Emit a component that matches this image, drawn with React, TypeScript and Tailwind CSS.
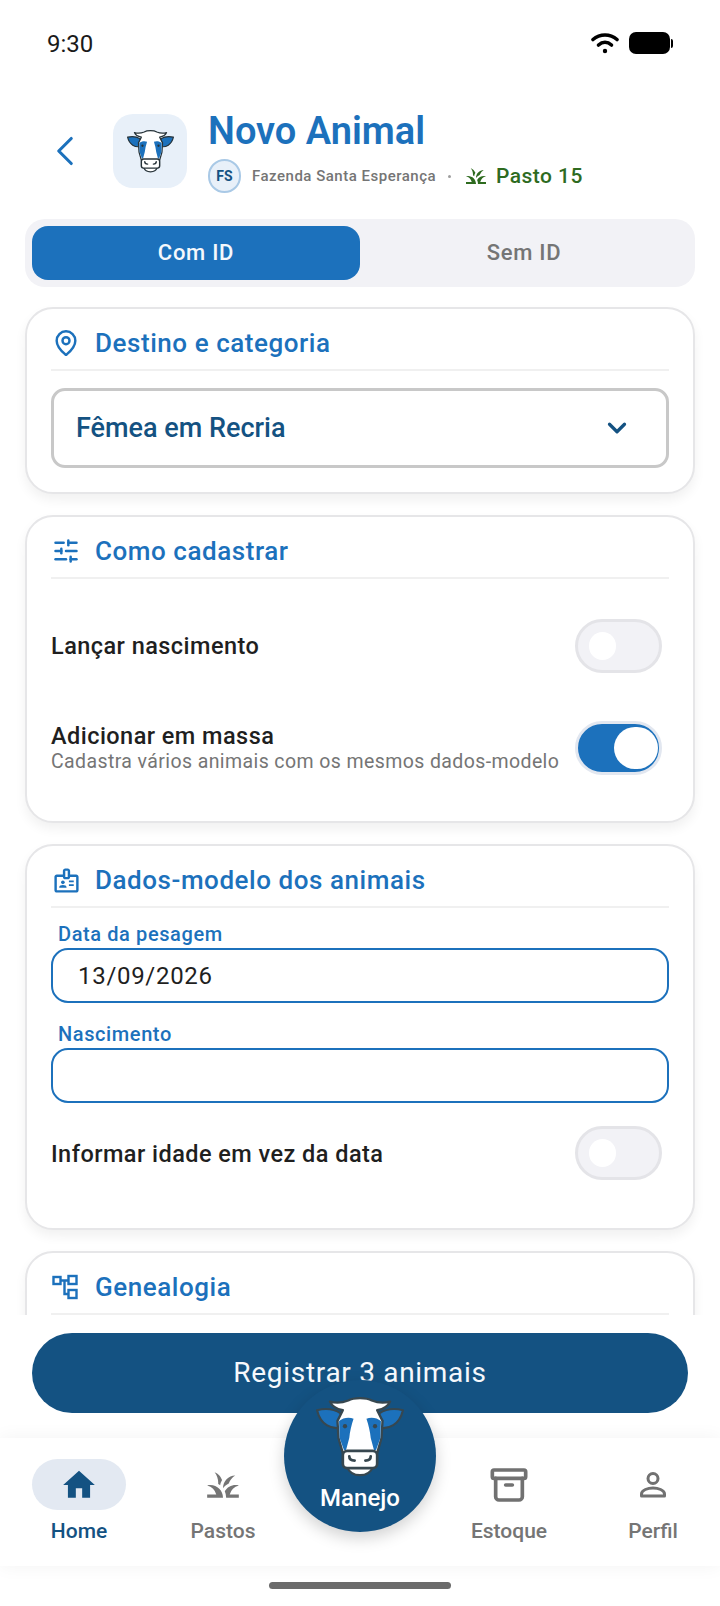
import { Archive, ChevronDown, ChevronLeft, MapPin, SlidersHorizontal } from 'lucide-react'
import type { ReactNode } from 'react'
import { MdGrass, MdHome, MdOutlineBadge } from 'react-icons/md'

// Cabeça da vaca, usada no cartão do topo e no botão Manejo
function CowIcon({ className, stroke }: { className: string; stroke: string }) {
    return (
        <svg viewBox="0 0 82 78" className={className}>
            <path d="M1 14C9 12 17 13 23 17L25 30C14 33 4 27 1 14Z" fill="#1c71bc" stroke={stroke} strokeWidth="2" strokeLinejoin="round" />
            <path d="M81 14C73 12 65 13 59 17L57 30C68 33 78 27 81 14Z" fill="#1c71bc" stroke={stroke} strokeWidth="2" strokeLinejoin="round" />
            <path
                d="M13 6C20 8 25 7 30 5C35 2 47 2 52 5C57 7 62 8 69 6C67 11 62 13 57 14L62 24L61 40L57 54L25 54L21 40L20 24L25 14C20 13 15 11 13 6Z"
                fill="#fff"
                stroke={stroke}
                strokeWidth="2.200"
                strokeLinejoin="round"
            />
            <path d="M21.500 24C25 21 31 20 35 22C33 28 31.500 34 31 40L28 51L26 51L22 40Z" fill="#1c71bc" />
            <path d="M60.500 24C57 21 51 20 47 22C49 28 50.500 34 51 40L54 51L56 51L60 40Z" fill="#1c71bc" />
            <circle cx="27" cy="29" r="2" fill={stroke} />
            <circle cx="55" cy="29" r="2" fill={stroke} />
            <path d="M29 67C33 77 49 77 53 67Z" fill="#fff" stroke={stroke} strokeWidth="2" strokeLinejoin="round" />
            <rect x="25" y="52" width="32" height="16" rx="4" fill="#fff" stroke={stroke} strokeWidth="2.500" />
            <path d="M31 57C31 60 33 61 36 61M51 57C51 60 49 61 46 61" fill="none" stroke={stroke} strokeWidth="2.500" strokeLinecap="round" />
        </svg>
    )
}

function TreeIcon() {
    return (
        <svg viewBox="0 0 26 26" className="h-[26px] w-[26px] text-[#1c71bc]" fill="none" stroke="currentColor" strokeWidth="2.400">
            <rect x="1.500" y="3" width="7" height="7" />
            <rect x="16.500" y="2" width="8" height="8" />
            <rect x="16.500" y="16" width="8" height="8" />
            <path d="M8.500 6.500H16.500M12.500 6.500V20H16.500" />
        </svg>
    )
}

function PersonIcon() {
    return (
        <svg viewBox="0 0 30 30" className="h-[30px] w-[30px] text-[#717171]" fill="none" stroke="currentColor" strokeWidth="3">
            <circle cx="15" cy="8.500" r="5" />
            <path d="M3.500 24C3.500 20 10 18 15 18C20 18 26.500 20 26.500 24V26H3.500Z" strokeLinejoin="round" />
        </svg>
    )
}

function Card({ icon, title, children, className }: { icon: ReactNode; title: string; children?: ReactNode; className: string }) {
    return (
        <section className={`shrink-0 rounded-[28px] border-2 border-[#e6e6e8] bg-white px-[24px] shadow-[0_6px_12px_rgba(0,0,0,0.06)] ${className}`}>
            <div className="flex h-[62px] items-center border-b-2 border-[#f0f0f0] pt-[8px]">
                <div className="flex w-[44px] items-center justify-start pl-[1px]">{icon}</div>
                <h2 className="text-[26px] font-medium leading-none tracking-[0.55px] text-[#1c71bc]">{title}</h2>
            </div>
            {children}
        </section>
    )
}

function Toggle({ on }: { on?: boolean }) {
    if (on) {
        return (
            <div className="flex h-[54px] w-[87px] shrink-0 items-center justify-end rounded-full border-[3px] border-[#e2e7f0] bg-[#1c71bc] pr-[1px]">
                <div className="h-[42px] w-[44px] rounded-full bg-white" />
            </div>
        )
    }
    return (
        <div className="flex h-[54px] w-[87px] shrink-0 items-center rounded-full border-[3px] border-[#e4e4e8] bg-[#f2f2f6] pl-[11px]">
            <div className="h-[28px] w-[27px] rounded-full bg-white" />
        </div>
    )
}

function DateField({ label, value, className }: { label: string; value?: string; className: string }) {
    return (
        <div className={className}>
            <p className="pl-[7px] text-[20px] font-medium leading-[22px] tracking-[0.6px] text-[#1c71bc]">{label}</p>
            <div className="mt-[3px] flex h-[55px] items-center rounded-[17px] border-2 border-[#1c71bc] pl-[25px] pt-[1px] text-[24px] leading-none tracking-[0.7px] text-[#1f1f1f]">
                {value}
            </div>
        </div>
    )
}

function NavItem({ icon, label, active, className }: { icon: ReactNode; label: string; active?: boolean; className: string }) {
    return (
        <div className={`flex w-[94px] flex-col items-center ${className}`}>
            <div className={`flex h-[51px] w-[94px] items-center justify-center rounded-[26px] ${active ? 'bg-[#e3e9f2]' : ''}`}>{icon}</div>
            <span className={`mt-[9px] text-[21px] font-medium leading-[24px] ${active ? 'font-bold text-[#145282]' : 'text-[#757575]'}`}>{label}</span>
        </div>
    )
}

export default function App() {
    return (
        <div className="relative flex h-[1606px] w-[720px] flex-col overflow-hidden bg-white font-['Roboto',sans-serif]">
            {/* barra de status */}
            <div className="flex h-[86px] shrink-0 items-center justify-between pl-[47px] pr-[47px]">
                <span className="pt-[1px] text-[24px] leading-none text-[#1a1a1a]">9:30</span>
                <div className="flex items-center gap-[10px]">
                    <svg viewBox="0 0 28 22" className="h-[22px] w-[28px]" fill="none" stroke="#000" strokeWidth="3.600" strokeLinecap="round">
                        <path d="M2 7.500C9 1.500 19 1.500 26 7.500" />
                        <path d="M7.500 13C11.500 9.500 16.500 9.500 20.500 13" />
                        <circle cx="14" cy="19" r="1.200" fill="#000" strokeWidth="2" />
                    </svg>
                    <div className="flex items-center">
                        <div className="h-[22px] w-[41px] rounded-[7px] bg-black" />
                        <div className="ml-[1px] h-[9px] w-[2px] rounded-r-sm bg-black" />
                    </div>
                </div>
            </div>

            {/* cabeçalho */}
            <header className="mt-[28px] flex h-[78px] shrink-0 items-start">
                <div className="flex h-[74px] w-[113px] items-center pl-[40px]">
                    <ChevronLeft className="h-[50px] w-[50px] text-[#1c71bc]" strokeWidth={1.5} />
                </div>
                <div className="flex h-[74px] w-[74px] items-center justify-center rounded-[20px] bg-[#e8f0f9]">
                    <CowIcon className="h-[45px] w-[47px]" stroke="#263238" />
                </div>
                <div className="ml-[21px]">
                    <h1 className="pt-[1px] text-[38px] font-semibold leading-[32px] text-[#1c71bc]">Novo Animal</h1>
                    <div className="mt-[12px] flex items-center">
                        <div className="flex h-[34px] w-[33px] items-center justify-center rounded-full border-2 border-[#a9c9e6] bg-[#e8f0f9] text-[14px] font-bold text-[#145282]">
                            FS
                        </div>
                        <span className="ml-[11px] text-[15px] font-medium tracking-[0.5px] text-[#757575]">Fazenda Santa Esperança</span>
                        <span className="ml-[12px] h-[3px] w-[3px] rounded-full bg-[#9e9e9e]" />
                        <MdGrass className="ml-[13px] h-[24px] w-[24px] text-[#2e6b1f]" />
                        <span className="ml-[8px] pt-[1px] text-[21px] font-medium tracking-[0.45px] text-[#2e6b1f]">Pasto 15</span>
                    </div>
                </div>
            </header>

            {/* abas */}
            <div className="mx-[25px] mt-[27px] flex h-[68px] shrink-0 rounded-[20px] bg-[#f2f2f6] p-[7px]">
                <div className="flex w-[328px] items-center justify-center rounded-[16px] bg-[#1c71bc] pb-[1px] text-[22px] font-medium tracking-[0.7px] text-[#f5f8fc]">Com ID</div>
                <div className="flex flex-1 items-center justify-center pb-[1px] text-[22px] font-medium tracking-[0.7px] text-[#757575]">Sem ID</div>
            </div>

            <main className="flex h-[1028px] shrink-0 flex-col gap-[21px] overflow-hidden px-[25px] pt-[20px]">
                <Card icon={<MapPin className="h-[28px] w-[28px] text-[#1c71bc]" strokeWidth={2.1} />} title="Destino e categoria" className="h-[187px]">
                    <div className="mt-[17px] flex h-[80px] items-center justify-between rounded-[14px] border-[3px] border-[#c8c8c8] pl-[22px] pr-[34px]">
                        <span className="text-[27px] font-medium leading-none text-[#145282]">Fêmea em Recria</span>
                        <ChevronDown className="h-[30px] w-[30px] text-[#145282]" strokeWidth={2.6} />
                    </div>
                </Card>

                <Card icon={<SlidersHorizontal className="h-[28px] w-[28px] text-[#1c71bc]" strokeWidth={2.1} />} title="Como cadastrar" className="h-[308px]">
                    <div className="mt-[40px] flex items-center justify-between pr-[7px]">
                        <span className="pt-[2px] text-[23.500px] font-medium leading-none tracking-[0.45px] text-[#1f1f1f]">Lançar nascimento</span>
                        <Toggle />
                    </div>
                    <div className="mt-[48px] flex items-center justify-between pr-[7px]">
                        <div className="mt-[1px]">
                            <p className="text-[23.500px] font-medium leading-[25px] tracking-[0.45px] text-[#1f1f1f]">Adicionar em massa</p>
                            <p className="mt-[2px] whitespace-nowrap text-[19.500px] leading-[22px] tracking-[0.4px] text-[#757575]">Cadastra vários animais com os mesmos dados-modelo</p>
                        </div>
                        <Toggle on />
                    </div>
                </Card>

                <Card icon={<MdOutlineBadge className="h-[29px] w-[29px] text-[#1c71bc]" />} title="Dados-modelo dos animais" className="h-[386px]">
                    <DateField label="Data da pesagem" value="13/09/2026" className="mt-[15px]" />
                    <DateField label="Nascimento" className="mt-[20px]" />
                    <div className="mt-[23px] flex items-center justify-between pr-[7px]">
                        <span className="pt-[4px] text-[23.500px] font-medium leading-none tracking-[0.45px] text-[#1f1f1f]">Informar idade em vez da data</span>
                        <Toggle />
                    </div>
                </Card>

                <Card icon={<TreeIcon />} title="Genealogia" className="h-[300px]" />
            </main>

            {/* botão de registrar */}
            <div className="shrink-0 px-[32px] pt-[18px] pb-[25px]">
                <button className="flex h-[80px] w-full items-center justify-center rounded-[40px] bg-[#145282] text-[28px] tracking-[0.7px] text-[#f5f8fc]">
                    Registrar 3 animais
                </button>
            </div>

            {/* navegação inferior */}
            <nav className="relative flex h-[128px] shrink-0 items-start bg-white pt-[21px] shadow-[0_0_18px_rgba(0,0,0,0.05)]">
                <NavItem icon={<MdHome className="h-[38px] w-[38px] text-[#145282]" />} label="Home" active className="ml-[32px]" />
                <NavItem icon={<MdGrass className="h-[38px] w-[38px] text-[#757575]" />} label="Pastos" className="ml-[50px]" />
                <NavItem icon={<Archive className="h-[40px] w-[40px] text-[#717171]" strokeWidth={2.2} />} label="Estoque" className="ml-[192px]" />
                <NavItem icon={<PersonIcon />} label="Perfil" className="ml-[50px]" />
            </nav>

            {/* botão central Manejo */}
            <div className="absolute left-[284px] top-[1380px] flex h-[152px] w-[152px] flex-col items-center rounded-full bg-[#145282] pt-[15px] shadow-[0_6px_16px_rgba(0,0,0,0.18)]">
                <CowIcon className="h-[84px] w-[88px]" stroke="#37474f" />
                <span className="mt-[6px] text-[24px] font-medium leading-[27px] text-white">Manejo</span>
            </div>

            {/* indicador inicial */}
            <div className="absolute bottom-[17px] left-[269px] h-[7px] w-[182px] rounded-full bg-[#6b6b6b]" />
        </div>
    )
}
